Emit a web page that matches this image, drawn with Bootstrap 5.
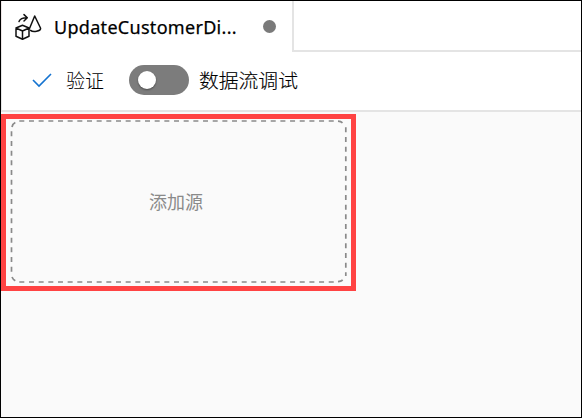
<!DOCTYPE html>
<html lang="zh-CN">
<head>
<meta charset="utf-8">
<meta name="viewport" content="width=device-width, initial-scale=1">
<title>数据流</title>
<link href="https://cdn.jsdelivr.net/npm/bootstrap@5.3.0/dist/css/bootstrap.min.css" rel="stylesheet">
<style>
body{font-family:"Noto Sans","Noto Sans CJK SC",sans-serif;color:#000}
.frame{height:418px;border:1px solid #000;background:#fafafa}
.tabs-row{height:51px}
.flow-tab{width:293px;padding-left:12px;border-left:1px solid #eee6e6;border-right:2px solid #e4e4e4;height:51px}
.tab-rest{border-bottom:2px solid #e4e4e4}
.tab-title{font-size:18px;line-height:24px;margin-left:11px;width:184px;letter-spacing:.3px;-webkit-text-stroke:.25px #000;white-space:nowrap}
.dirty-dot{width:13px;height:13px;background:#7a7a7a;margin-left:25px}
.tools{height:60px;border-bottom:2px solid #e4e4e4;border-left:1px solid #e6e6e6;padding-left:30px;padding-bottom:2px}
.tool-text{font-family:"Noto Sans CJK SC",sans-serif;font-size:19px;line-height:28px;font-weight:300;white-space:nowrap}
.validate-label{margin-left:14px}
.debug-label{font-size:19.8px;-webkit-text-stroke:.15px #000}
.debug-switch{width:60px;height:30px;background:#7c7c7c;padding-left:9px;margin-left:25px;margin-right:10px}
.knob{width:18px;height:18px;background:#fff;box-shadow:0 1px 2px #0006}
.source-box{width:355px;height:177px;border:5px solid #ff4343;margin-top:2px}
.source-label{font-family:"Noto Sans CJK SC",sans-serif;font-size:18px;line-height:26px;fill:#8a8a8a}
</style>
<script src="https://cdn.jsdelivr.net/npm/bootstrap@5.3.0/dist/js/bootstrap.bundle.min.js"></script>
</head>
<body>
<div class="frame overflow-hidden">
  <div class="tabs-row d-flex bg-white">
    <div class="flow-tab d-flex align-items-center flex-shrink-0">
      <svg width="29" height="28" viewBox="14 12 29 28" fill="none" stroke="#111" stroke-width="1.5" stroke-linejoin="round" stroke-linecap="round">
        <path d="M16 27 22.5 24.3 29 27V35.3L22.5 38.3 16 35.3ZM16 27 22.5 30 29 27M22.5 30V38.3"/>
        <path d="M29.4 27.8 34.7 15 40.6 27.3C40.8 30.3 33 31.6 30.6 29.4"/>
        <path d="M19 20.6C20 17.8 22 16.8 27 16.8M24 13.6 27.3 16.8 24 20"/>
      </svg>
      <span class="tab-title">UpdateCustomerDi...</span>
      <span class="dirty-dot rounded-circle"></span>
    </div>
    <div class="tab-rest flex-grow-1"></div>
  </div>
  <div class="tools d-flex align-items-center bg-white">
    <svg width="20" height="16" viewBox="0 0 20 16" fill="none" stroke="#1473d0" stroke-width="1.6"><path d="M1 8 7 14 19 2"/></svg>
    <span class="tool-text validate-label">验证</span>
    <span class="debug-switch rounded-pill d-flex align-items-center"><span class="knob rounded-circle"></span></span>
    <span class="tool-text debug-label">数据流调试</span>
  </div>
  <div class="source-box">
    <svg class="d-block" width="345" height="167" viewBox="6 119 345 167" fill="none" stroke="#8a8a8a" stroke-width="1.7">
      <g stroke-dasharray="5 4.67">
        <path d="M19.3 121H337M19.3 282H337M11.5 131.3V273M345.8 127.3V276"/>
      </g>
      <path d="M12 127Q12.5 124 15.3 122.6M338 121.2Q341 121.4 342.5 122.8M12 277Q13 279.5 15.3 280.7M338 281.7Q341 281.5 342.7 280"/>
      <text class="source-label" x="149" y="209" stroke="none">添加源</text>
    </svg>
  </div>
</div>
</body>
</html>
